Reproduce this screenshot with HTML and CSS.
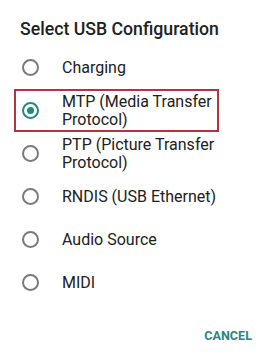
FILE: index.html
```html
<!DOCTYPE html>
<html lang="en">
<head>
    <meta charset="UTF-8">
    <meta name="viewport" content="width=device-width, initial-scale=1.0">
    <title>Select USB Configuration</title>
    <link rel="stylesheet" href="styles.css">
</head>
<body>
    <div class="dialog">
        <div class="title">Select USB Configuration</div>

        <ul class="options">
            <li class="option">
                <span class="radio"></span>
                <span class="label">Charging</span>
            </li>
            <li class="option selected highlight">
                <span class="radio"></span>
                <span class="label">MTP (Media Transfer Protocol)</span>
            </li>
            <li class="option">
                <span class="radio"></span>
                <span class="label">PTP (Picture Transfer Protocol)</span>
            </li>
            <li class="option">
                <span class="radio"></span>
                <span class="label">RNDIS (USB Ethernet)</span>
            </li>
            <li class="option">
                <span class="radio"></span>
                <span class="label">Audio Source</span>
            </li>
            <li class="option">
                <span class="radio"></span>
                <span class="label">MIDI</span>
            </li>
        </ul>

        <div class="actions">
            <button class="cancel">CANCEL</button>
        </div>
    </div>
</body>
</html>
```

FILE: styles.css
```css
* {
    margin: 0;
    padding: 0;
    box-sizing: border-box;
}

body {
    background: #ffffff;
    font-family: Roboto, "Noto Sans", sans-serif;
    color: #212121;
}

.dialog {
    width: 273px;
    height: 358px;
    padding-top: 17px;
}

.title {
    font-size: 17.7px;
    font-weight: 500;
    line-height: 24px;
    padding-left: 20px;
    color: #212121;
}

.options {
    list-style: none;
    margin: 5px 0 0 14px;
    width: 205px;
}

.option {
    display: flex;
    align-items: center;
    gap: 23px;
    min-height: 43px;
    padding: 0 1px 0 8px;
}

.highlight {
    outline: 2px solid #b23440;
    outline-offset: -2px;
}

.radio {
    flex: none;
    width: 17px;
    height: 17px;
    border: 2px solid #7a7a7a;
    border-radius: 50%;
    display: flex;
    align-items: center;
    justify-content: center;
}

.selected .radio {
    border-color: #1f8b80;
}

.selected .radio::after {
    content: "";
    width: 7px;
    height: 7px;
    border-radius: 50%;
    background: #1f8b80;
}

.label {
    font-size: 16px;
    line-height: 18px;
}

.actions {
    display: flex;
    justify-content: flex-end;
    padding: 24px 21px 0 0;
}

.cancel {
    background: none;
    border: none;
    font-family: Roboto, "Noto Sans", sans-serif;
    font-size: 12.6px;
    font-weight: 700;
    color: #26897f;
}
```
